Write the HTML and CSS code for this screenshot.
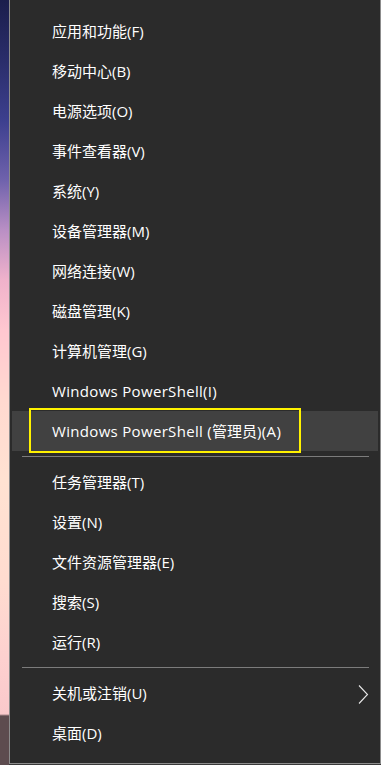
FILE: index.html
```html
<!DOCTYPE html>
<html lang="zh-CN">
<head>
<meta charset="utf-8">
<link rel="stylesheet" href="styles.css">
</head>
<body>
<div class="screen">
  <div class="wallpaper"></div>
  <div class="menu">
    <div class="item">应用和功能(F)</div>
    <div class="item">移动中心(B)</div>
    <div class="item">电源选项(O)</div>
    <div class="item">事件查看器(V)</div>
    <div class="item">系统(Y)</div>
    <div class="item">设备管理器(M)</div>
    <div class="item">网络连接(W)</div>
    <div class="item">磁盘管理(K)</div>
    <div class="item">计算机管理(G)</div>
    <div class="item"><span class="latin">Windows PowerShell(I)</span></div>
    <div class="item active"><span class="latin">Windows PowerShell (</span>管理员<span class="latin">)(A)</span><span class="mark"></span></div>
    <div class="sep"></div>
    <div class="item">任务管理器(T)</div>
    <div class="item">设置(N)</div>
    <div class="item">文件资源管理器(E)</div>
    <div class="item">搜索(S)</div>
    <div class="item">运行(R)</div>
    <div class="sep"></div>
    <div class="item has-sub">关机或注销(U)
      <svg class="chev" width="11" height="19" viewBox="0 0 11 19"><path d="M1 0.5 L9.5 9.5 L1 18.5" fill="none" stroke="#e8e8e8" stroke-width="1.1"/></svg>
    </div>
    <div class="item">桌面(D)</div>
  </div>
</div>
</body>
</html>
```

FILE: styles.css
```css
html, body {
  margin: 0;
  padding: 0;
  background: #3a3a3a;
}
.screen {
  display: flex;
  width: 381px;
  height: 765px;
  overflow: hidden;
}
.wallpaper {
  width: 9px;
  flex: none;
  height: 765px;
  background: linear-gradient(180deg,
    #1b1e4c 0px,
    #2a2d6a 60px,
    #3c3f8e 120px,
    #6f62ac 180px,
    #b98fc4 230px,
    #f0b2cb 280px,
    #ffc7d0 330px,
    #ffd9d0 400px,
    #ffe2d2 480px,
    #ffdcd0 580px,
    #fdd0cf 660px,
    #f9c9cb 714px,
    #5d4c4f 716px,
    #5d4c4f 765px);
}
.menu {
  flex: 1;
  background: #2b2b2b;
  border-left: 1px solid #8c8c8c;
  border-right: 1px solid #8c8c8c;
  border-bottom: 1px solid #8c8c8c;
  padding-top: 11px;
  box-sizing: border-box;
  height: 764px;
  display: flex;
  flex-direction: column;
  font-family: "Open Sans", "Noto Sans CJK SC", sans-serif;
  font-size: 15px;
  color: #ffffff;
}
.item {
  position: relative;
  height: 40px;
  line-height: 40px;
  margin: 0 2px 0 2px;
  padding-left: 40px;
  white-space: nowrap;
}
.latin {
  letter-spacing: 0.32px;
}
.item.active {
  background: #414141;
}
.mark {
  position: absolute;
  left: 17px;
  top: -3px;
  width: 268px;
  height: 41px;
  border: 2px solid #fff200;
}
.sep {
  height: 1px;
  background: #7c7c7c;
  margin: 5px 11px 5px 12px;
}
.chev {
  position: absolute;
  left: 346px;
  top: 12px;
}
```
